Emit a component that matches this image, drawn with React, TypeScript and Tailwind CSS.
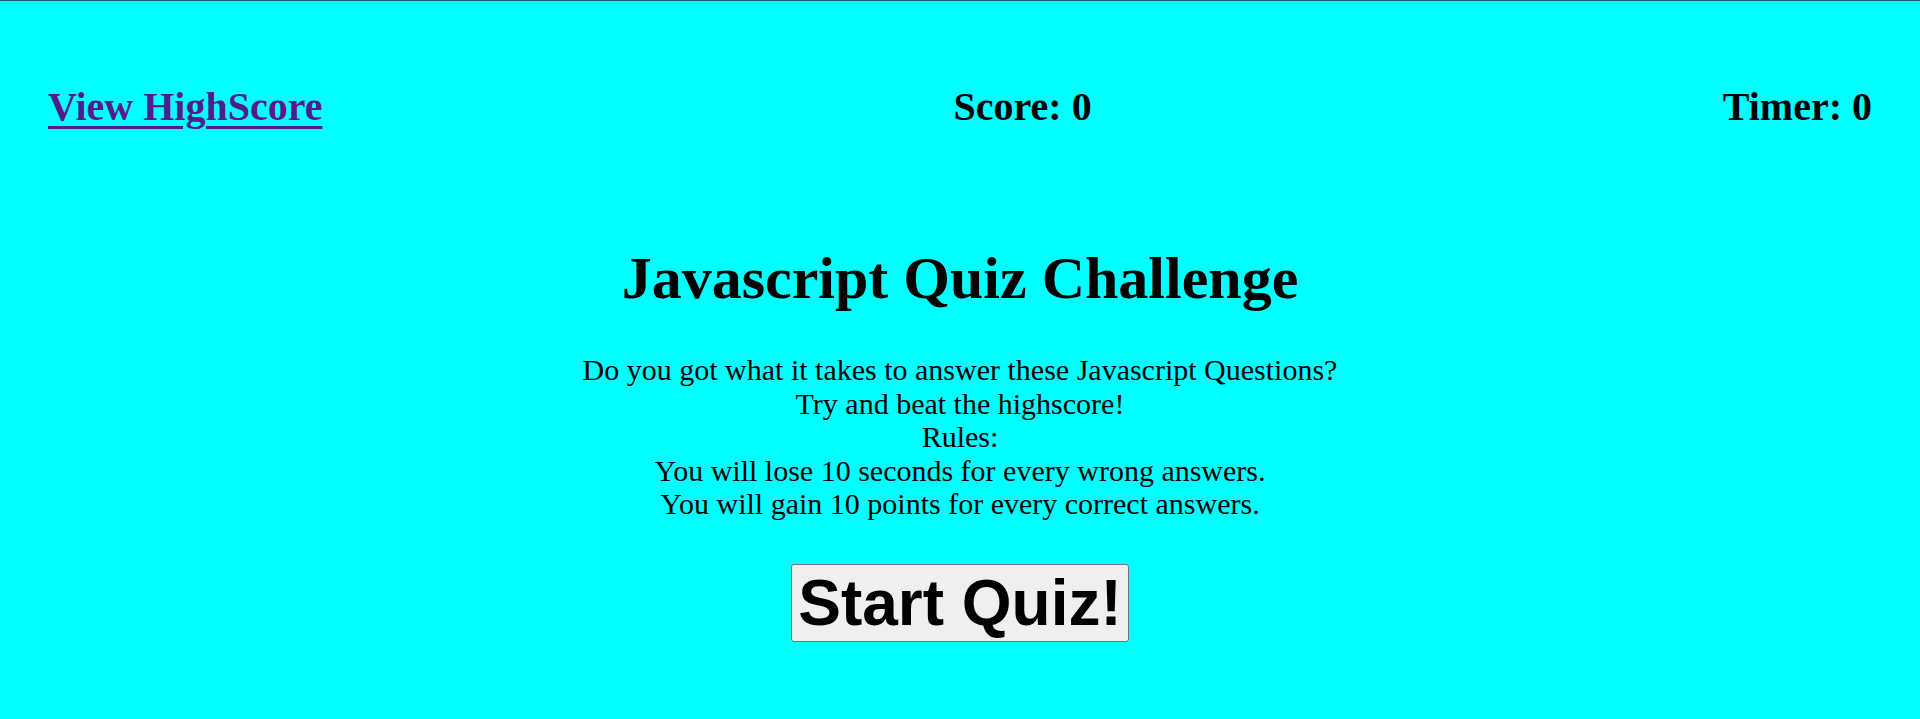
export default function App() {
  return (
    <div className="min-h-[719px] bg-[#00ffff] border-t border-[#1b5e6b] text-black" style={{ fontFamily: '"Liberation Serif", "Times New Roman", serif' }}>
      <header className="flex justify-between items-start px-12 pt-[83px]">
        <a href="#" className="text-[40px] leading-[46px] font-bold text-[#551a8b] underline decoration-[3px] underline-offset-[6px]">View HighScore</a>
        <div className="text-[40px] leading-[46px] font-bold">Score: 0</div>
        <div className="text-[40px] leading-[46px] font-bold">Timer: 0</div>
      </header>
      <main className="flex flex-col items-center text-center pt-[114px]">
        <h1 className="text-[60px] leading-[69px] font-bold">Javascript Quiz Challenge</h1>
        <p className="mt-[40px] text-[30px] leading-[33.5px]">
          Do you got what it takes to answer these Javascript Questions?
          <br />
          Try and beat the highscore!
          <br />
          Rules:
          <br />
          You will lose 10 seconds for every wrong answers.
          <br />
          You will gain 10 points for every correct answers.
        </p>
        <button
          className="mt-[43px] bg-[#efefef] border border-[#767676] rounded-[3px] px-[6px] py-px text-[64px] leading-[74px] font-bold text-black"
          style={{ fontFamily: '"Liberation Sans", Arial, sans-serif' }}
        >
          Start Quiz!
        </button>
      </main>
    </div>
  );
}
